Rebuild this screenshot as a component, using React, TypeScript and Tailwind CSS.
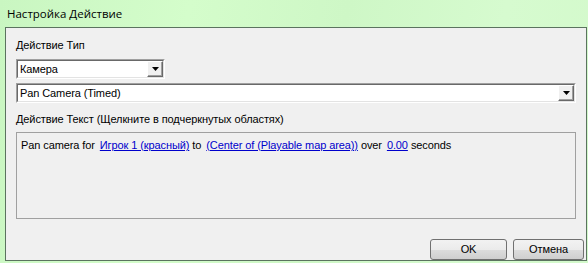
import { useState } from "react"

function Arrow() {
    return (
        <svg width="7" height="4" viewBox="0 0 7 4">
            <path d="M0 0 H7 L3.5 4 Z" fill="#000" />
        </svg>
    )
}

function Combo({ value, width }: { value: string; width: string }) {
    return (
        <div className={`${width} h-[20px] flex border-t border-l border-t-[#a0a0a0] border-l-[#a0a0a0] border-b border-r border-b-white border-r-white`}>
            <div className="flex-1 flex border-t border-l border-t-[#696969] border-l-[#696969] border-b border-r border-b-[#e3e3e3] border-r-[#e3e3e3] bg-white">
                <div className="flex-1 pl-[2px] leading-[16px] text-black">{value}</div>
                <div className="w-[16px] h-[16px] flex items-center justify-center bg-[#f0f0f0] border-t border-l border-t-white border-l-white border-b border-r border-b-[#696969] border-r-[#696969] shadow-[inset_-1px_-1px_0_#a0a0a0]">
                    <Arrow />
                </div>
            </div>
        </div>
    )
}

export default function App() {
    const [seconds] = useState("0.00")

    return (
        <div className="w-[588px] h-[263px] overflow-hidden bg-[linear-gradient(100deg,#c9f6c1_0%,#d4fdcb_30%,#cef7c6_55%,#d6fbcf_80%,#d3f9cb_100%)] font-['Liberation_Sans',Arial,sans-serif] text-[11px] tracking-[-0.1px]">
            <div className="h-[27px] pl-[7px] pt-[6px] text-[11.5px] leading-[16px] text-black font-['Open_Sans',sans-serif] tracking-normal">
                Настройка Действие
            </div>
            <div className="ml-[5px] w-[582px] h-[234px] border border-[#5b735f] bg-[#f0f0f0] flex flex-col px-[10px] pt-[11px]">
                <div className="leading-[13px] text-black">Действие Тип</div>
                <div className="mt-[7px]">
                    <Combo value="Камера" width="w-[149px]" />
                </div>
                <div className="mt-[4px]">
                    <Combo value="Pan Camera (Timed)" width="w-[560px]" />
                </div>
                <div className="mt-[10px] leading-[13px] text-black">Действие Текст (Щелкните в подчеркнутых областях)</div>
                <div className="mt-[6px] w-[560px] h-[87px] border border-[#a0a0a0] pl-[4px] pt-[6px] leading-[13px] text-black">
                    Pan camera for
                    <a href="#" className="text-[#0000cc] underline ml-[5px] mr-[3px]">Игрок 1 (красный)</a>
                    to
                    <a href="#" className="text-[#0000cc] underline ml-[5px] mr-[3px]">(Center of (Playable map area))</a>
                    over
                    <a href="#" className="text-[#0000cc] underline ml-[5px] mr-[3px]">{seconds}</a>
                    seconds
                </div>
                <div className="mt-[20px] flex justify-end gap-[6px]">
                    <button className="w-[77px] h-[21px] rounded-[3px] border border-[#707070] bg-[linear-gradient(#f2f2f2,#ebebeb_50%,#dddddd_51%,#cfcfcf)] text-black leading-[19px]">OK</button>
                    <button className="w-[71px] h-[21px] rounded-[3px] border border-[#707070] bg-[linear-gradient(#f2f2f2,#ebebeb_50%,#dddddd_51%,#cfcfcf)] text-black leading-[19px] -mr-[8px]">Отмена</button>
                </div>
            </div>
        </div>
    )
}
